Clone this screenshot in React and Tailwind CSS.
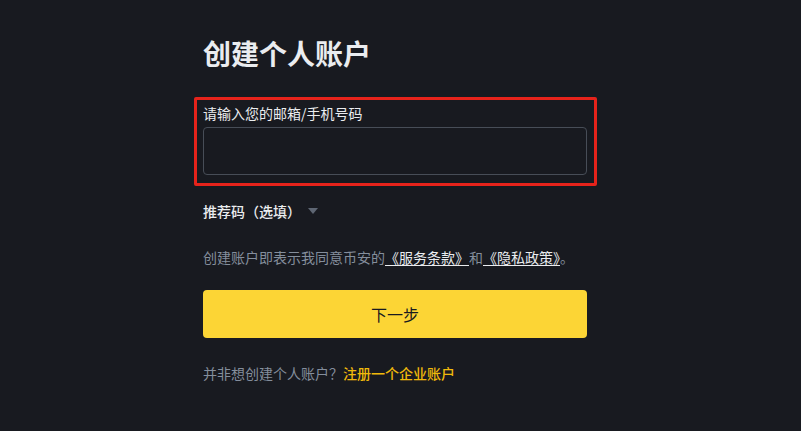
export default function App() {
  const font = { fontFamily: '"Noto Sans CJK SC", "Noto Sans", sans-serif' };
  return (
    <div
      className="min-h-[431px] w-full bg-[#181a20] pl-[203px] pt-[35px]"
      style={font}
    >
      <div className="flex w-[384px] flex-col">
        <h1 className="text-[28px] font-bold leading-[36px] text-[#eaecef]">
          创建个人账户
        </h1>

        <div className="relative mt-[32px] flex flex-col">
          <div className="pointer-events-none absolute -left-[9px] -right-[10px] -top-[6px] -bottom-[11px] rounded-[2px] border-[3px] border-[#e5231b]" />
          <label className="text-[14px] leading-[20px] text-[#eaecef]">
            请输入您的邮箱/手机号码
          </label>
          <input
            className="mt-[4px] h-[48px] w-full rounded-[4px] border border-[#474d57] bg-transparent px-3 text-[14px] text-[#eaecef] outline-none"
            type="text"
          />
        </div>

        <div className="mt-[26px] flex items-center">
          <span className="text-[14px] font-medium leading-[20px] text-[#eaecef]">
            推荐码（选填）
          </span>
          <svg className="ml-[7px]" width="10" height="6" viewBox="0 0 10 6">
            <path d="M0 0 H10 L5 6 Z" fill="#5e6673" />
          </svg>
        </div>

        <p className="mt-[26px] text-[14px] leading-[20px] text-[#848e9c]">
          创建账户即表示我同意币安的
          <a className="text-[#eaecef] underline underline-offset-2">《服务条款》</a>
          和
          <a className="text-[#eaecef] underline underline-offset-2">《隐私政策》</a>
          。
        </p>

        <button className="mt-[23px] flex h-[48px] w-full items-center justify-center rounded-[4px] bg-[#fcd535] text-[16px] text-[#181a20]">
          下一步
        </button>

        <p className="mt-[25px] text-[14px] leading-[20px] text-[#848e9c]">
          并非想创建个人账户？
          <a className="font-medium text-[#f0b90b]">注册一个企业账户</a>
        </p>
      </div>
    </div>
  );
}
